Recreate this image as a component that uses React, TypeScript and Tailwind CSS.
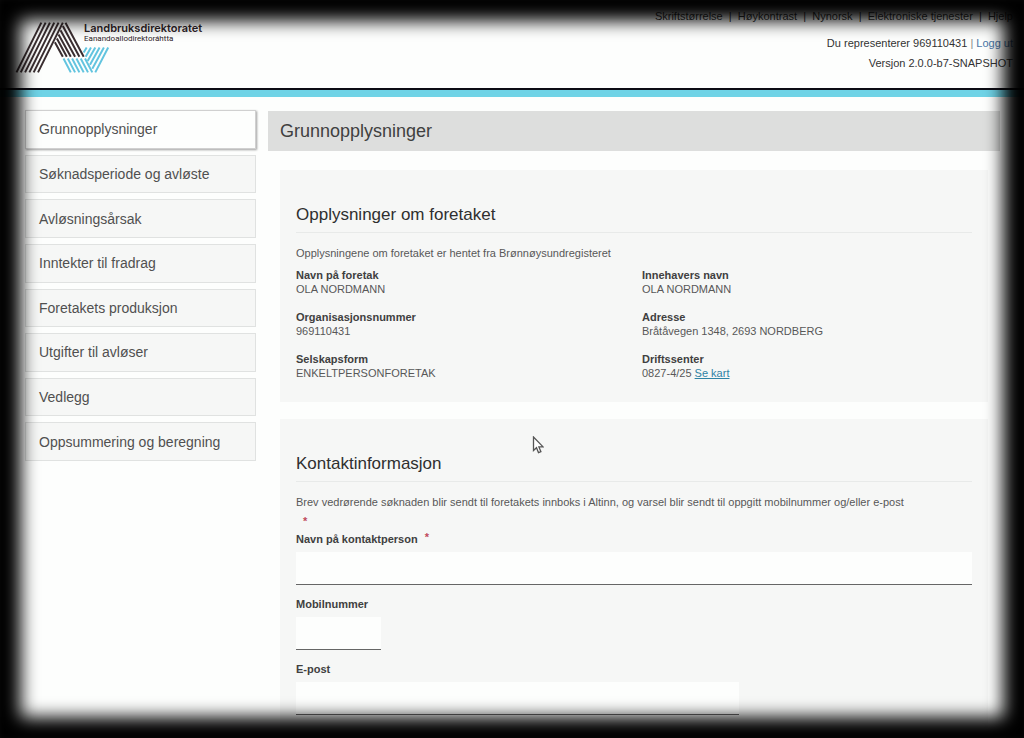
import { FC, ReactNode, useState } from "react";

const steps = [
    "Grunnopplysninger",
    "Søknadsperiode og avløste",
    "Avløsningsårsak",
    "Inntekter til fradrag",
    "Foretakets produksjon",
    "Utgifter til avløser",
    "Vedlegg",
    "Oppsummering og beregning",
];

const topLinks = [
    "Skriftstørrelse",
    "Høykontrast",
    "Nynorsk",
    "Elektroniske tjenester",
    "Hjelp",
];

const LogoComp: FC = () => (
    <svg width="95" height="51" viewBox="45 66 284 154" fill="none" aria-hidden="true">
        <g stroke="#3a2e31" strokeWidth="6">
            <path d="M48 218 123 68M61 218 136 68M74 218 149 68M87 218 162 68M100 218 175 68M113 218 188 68" />
            <path d="M196 68 251 171M188 78 238 171M181 91 225 171M175 104 212 171M170 116 200 171M164 127 188 171" />
        </g>
        <g stroke="#62c4df" strokeWidth="6">
            <path d="M190 176 212 218M203 176 225 218M216 176 238 218M229 176 251 218M242 176 264 218M255 176 277 218" />
            <path d="M325 143 286 218M312 143 277 207M299 143 270 195M286 143 263 184M273 143 257 171M260 143 251 158" />
        </g>
    </svg>
);

const HeaderComp: FC = () => (
    <header className="flex h-[97px] justify-between border-b-[7px] border-[#6fd3e6] pl-[15px] pr-[11px] shadow-[inset_0_-2px_0_#0c0c14]">
        <div className="flex items-start pt-[22px]">
            <LogoComp />
            <div className="-ml-[26px] font-[Inter,sans-serif] text-[#2d2326]">
                <p className="text-[11px] leading-[12px] font-semibold">Landbruksdirektoratet</p>
                <p className="font-[Roboto,sans-serif] text-[8px] leading-[9px]">Eanandoallodirektoráhtta</p>
            </div>
        </div>
        <div className="flex flex-col items-end pt-[6px] text-[#333]">
            <nav className="flex leading-5">
                {topLinks.map((link, i) => (
                    <span key={link} className="whitespace-pre">
                        {i > 0 && "  |  "}
                        <a href="#">{link}</a>
                    </span>
                ))}
            </nav>
            <p className="mt-[7px] leading-5">
                Du representerer 969110431 <span className="text-[#888]">|</span>{" "}
                <a href="#" className="text-[#4a76a8]">Logg ut</a>
            </p>
            <p className="leading-5">Versjon 2.0.0-b7-SNAPSHOT</p>
        </div>
    </header>
);

const StepMenuComp: FC = () => {
    const [active, setActive] = useState<string>(steps[0]);

    return (
        <nav className="flex min-h-[351px] w-[231px] shrink-0 flex-col gap-[6px] self-start text-[14px] text-[#505050]">
            {steps.map((step) => (
                <button
                    key={step}
                    type="button"
                    onClick={() => setActive(step)}
                    className={
                        step === active
                            ? "flex-1 border border-[#d0d0d0] bg-[#fdfefd] px-[13px] text-left shadow-[1px_1px_2px_#a0a0a0]"
                            : "flex-1 border border-[#e0e2e1] bg-[#f6f7f6] px-[13px] text-left"
                    }
                >
                    {step}
                </button>
            ))}
        </nav>
    );
};

const PanelComp: FC<{ title: string; intro: string; className: string; children: ReactNode }> = ({
    title,
    intro,
    className,
    children,
}) => (
    <section className={`bg-[#f6f7f6] px-4 pt-[34px] ${className}`}>
        <h2 className="border-b border-[#e8eae9] pb-[6px] text-[17px] leading-[22px] text-[#2f2f2f]">{title}</h2>
        <p className="mt-[13px]">{intro}</p>
        {children}
    </section>
);

const InfoComp: FC<{ label: string; children: ReactNode }> = ({ label, children }) => (
    <div>
        <dt className="font-bold text-[#404040]">{label}</dt>
        <dd>{children}</dd>
    </div>
);

const FieldComp: FC<{ id: string; label: string; width: string; required?: boolean }> = ({
    id,
    label,
    width,
    required,
}) => (
    <div className="flex flex-col gap-[6px]">
        <label htmlFor={id} className="font-bold text-[#404040]">
            {label}
            {required && <span className="ml-[7px] align-top leading-[10px] text-[#c04a5c]">*</span>}
        </label>
        <input
            id={id}
            type="text"
            required={required}
            className={`h-[33px] border-b border-[#666] bg-[#fdfefd] px-2 outline-none ${width}`}
        />
    </div>
);

const App: FC = (): ReactNode => {
    return (
        <div className="flex min-h-screen flex-col bg-[#fdfefd] font-['Liberation_Sans',Arial,sans-serif] text-[11px] leading-[14px] text-[#585858]">
            <HeaderComp />

            <div className="flex flex-1 gap-3 pt-[13px] pr-6 pl-[25px]">
                <StepMenuComp />

                <main className="flex flex-1 flex-col">
                    <h1 className="mt-px bg-[#dddedd] px-3 py-2 text-[18px] leading-6 text-[#404040]">
                        Grunnopplysninger
                    </h1>

                    <div className="flex flex-1 flex-col gap-[17px] px-3 pt-[19px]">
                        <PanelComp
                            title="Opplysninger om foretaket"
                            intro="Opplysningene om foretaket er hentet fra Brønnøysundregisteret"
                            className="pb-[22px]"
                        >
                            <dl className="mt-2 grid grid-cols-2 gap-x-4 gap-y-[14px]">
                                <InfoComp label="Navn på foretak">OLA NORDMANN</InfoComp>
                                <InfoComp label="Innehavers navn">OLA NORDMANN</InfoComp>
                                <InfoComp label="Organisasjonsnummer">969110431</InfoComp>
                                <InfoComp label="Adresse">Bråtåvegen 1348, 2693 NORDBERG</InfoComp>
                                <InfoComp label="Selskapsform">ENKELTPERSONFORETAK</InfoComp>
                                <InfoComp label="Driftssenter">
                                    0827-4/25{" "}
                                    <a href="#" className="text-[#2f83a5] underline">Se kart</a>
                                </InfoComp>
                            </dl>
                        </PanelComp>

                        <PanelComp
                            title="Kontaktinformasjon"
                            intro="Brev vedrørende søknaden blir sendt til foretakets innboks i Altinn, og varsel blir sendt til oppgitt mobilnummer og/eller e-post"
                            className="flex-1"
                        >
                            <p className="mt-[5px] mb-1 ml-[7px] font-bold text-[#c04a5c]">*</p>
                            <form className="flex flex-col gap-3">
                                <FieldComp id="kontaktperson" label="Navn på kontaktperson" width="w-full" required />
                                <FieldComp id="mobil" label="Mobilnummer" width="w-[85px]" />
                                <FieldComp id="epost" label="E-post" width="w-[443px]" />
                            </form>
                        </PanelComp>
                    </div>
                </main>
            </div>

            {/* Dark soft frame around the whole window */}
            <div className="pointer-events-none fixed inset-0 shadow-[inset_0_0_17px_21px_#000]" />

            {/* Mouse pointer */}
            <svg
                className="pointer-events-none absolute top-[436px] left-[532px]"
                width="12"
                height="18"
                viewBox="0 0 12 18"
                aria-hidden="true"
            >
                <path
                    d="M1.5 1v13.5l3-2.8 2 5 2.4-1-2-4.8h4.2z"
                    fill="#fff"
                    stroke="#555"
                    strokeWidth="1.3"
                />
            </svg>
        </div>
    );
};

export default App;
